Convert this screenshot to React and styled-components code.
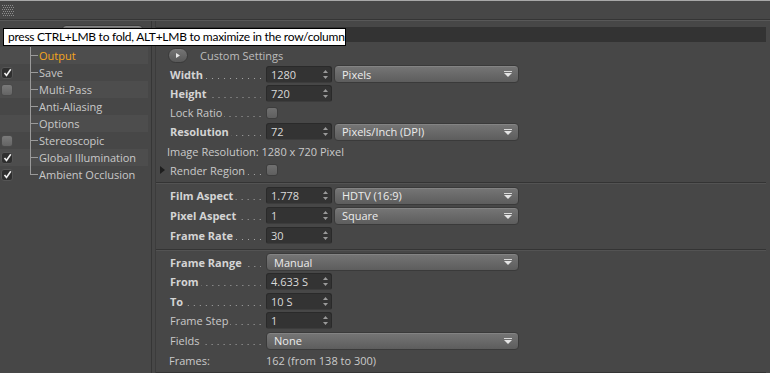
import React from "react"
import styled, { createGlobalStyle } from "styled-components"

const GlobalStyle = createGlobalStyle`
  html, body { margin: 0; padding: 0; background: #474747; }
  body {
    font-family: "Open Sans", "Noto Sans", sans-serif;
    font-size: 11px;
    color: #cfcfcf;
    overflow: hidden;
  }
`

const Window = styled.div`
  position: relative;
  width: 770px;
  height: 373px;
  overflow: hidden;
  background: #474747;
  display: flex;
  flex-direction: column;
`

const TopBar = styled.div`
  height: 18px;
  border-top: 1px solid #a8a8a8;
  border-bottom: 1px solid #353535;
  display: flex;
  align-items: center;
  padding-left: 2px;
`

const Rule = styled.div`
  height: 1px;
  background: #585858;
`

const Main = styled.div`
  flex: 1;
  display: flex;
  min-height: 0;
`

/* ---------- left tree ---------- */

const LeftPanel = styled.div`
  width: 151px;
  border-right: 1px solid #363636;
  display: flex;
  flex-direction: column;
`

const RendererRow = styled.div`
  height: 26px;
  display: flex;
  align-items: center;
  padding-left: 10px;
  color: #cfcfcf;
`

const RendererLabel = styled.span`
  width: 52px;
`

const TreeRow = styled.div`
  width: 148px;
  height: 17px;
  display: flex;
  align-items: center;
  background: ${p => (p.$even ? "#4d4d4d" : "transparent")};
`

const CheckCell = styled.div`
  width: 30px;
  height: 100%;
  display: flex;
  align-items: center;
  padding-left: 1px;
  box-sizing: border-box;
`

const TreeCheck = styled.div`
  width: 12px;
  height: 12px;
  box-sizing: border-box;
  border-radius: 3px;
  display: flex;
  align-items: center;
  justify-content: center;
  background: ${p => (p.$on ? "#2f2f2f" : "linear-gradient(#7a7a7a, #646464)")};
  border: 1px solid ${p => (p.$on ? "#555" : "#4a4a4a")};
`

const TreeLabel = styled.span`
  margin-left: 1px;
  white-space: nowrap;
  color: ${p => (p.$active ? "#f5a61d" : "#c9c9c9")};
`

/* ---------- right attributes ---------- */

const RightPanel = styled.div`
  flex: 1;
  padding: 0 4px 0 3px;
  display: flex;
`

const Inner = styled.div`
  flex: 1;
  border-left: 1px solid #3c3c3c;
  display: flex;
  flex-direction: column;
`

const Header = styled.div`
  margin-top: 6px;
  height: 15px;
  line-height: 15px;
  background: #333333;
  color: #d0d0d0;
  font-weight: 700;
  padding-left: 14px;
`

const Group = styled.div`
  padding-top: ${p => p.$pt}px;
  padding-bottom: ${p => p.$pb}px;
  display: flex;
  flex-direction: column;
`

const Separator = styled.div`
  height: 1px;
  background: #343434;
  border-bottom: 1px solid #535353;
  flex: none;
`

const Row = styled.div`
  height: ${p => p.$h}px;
  flex: none;
  display: flex;
  align-items: center;
  padding-left: ${p => p.$indent ?? 14}px;
`

const Label = styled.div`
  width: 91px;
  height: 15px;
  line-height: 15px;
  margin-right: 5px;
  display: flex;
  white-space: nowrap;
  font-weight: ${p => (p.$bold ? 700 : 400)};
  color: ${p => (p.$bold ? "#d4d4d4" : "#c9c9c9")};
`

const LabelText = styled.span`
  flex: none;
`

/* leader dots, right aligned like the app draws them */
const Leader = styled.span`
  flex: 1;
  margin-left: 2px;
  background-image: linear-gradient(to right, #a6a6a6 1px, transparent 1px);
  background-size: 6px 1px;
  background-repeat: repeat-x;
  background-position: right 1px bottom 3px;
`

const NumberField = styled.div`
  width: 66px;
  height: 17px;
  box-sizing: border-box;
  background: #333333;
  border: 1px solid #2a2a2a;
  border-bottom-color: #3c3c3c;
  border-radius: 3px;
  display: flex;
  align-items: center;
  justify-content: space-between;
  padding: 0 3px 0 4px;
  color: #dadada;
`

const Dropdown = styled.div`
  width: ${p => p.$w}px;
  margin-left: ${p => p.$ml ?? 0}px;
  height: 18px;
  box-sizing: border-box;
  background: linear-gradient(#767676, #5d5d5d);
  border: 1px solid #3a3a3a;
  border-radius: 4px;
  box-shadow: inset 0 1px 0 rgba(255, 255, 255, 0.1);
  display: flex;
  align-items: center;
  justify-content: space-between;
  padding: 0 6px 0 7px;
  color: #ececec;
`

const CheckBox = styled.div`
  width: 12px;
  height: 12px;
  box-sizing: border-box;
  border-radius: 3px;
  border: 1px solid #3d3d3d;
  background: linear-gradient(#707070, #5f5f5f);
`

const RoundButton = styled.div`
  width: 20px;
  height: 15px;
  box-sizing: border-box;
  border-radius: 8px;
  border: 1px solid #3a3a3a;
  background: linear-gradient(#767676, #585858);
  display: flex;
  align-items: center;
  justify-content: center;
`

const SubTitle = styled.span`
  margin-left: 12px;
  color: #bdbdbd;
`

const Plain = styled.span`
  color: #cacaca;
  width: ${p => (p.$w ? `${p.$w}px` : "auto")};
  flex: none;
`

const Tooltip = styled.div`
  position: absolute;
  left: 3px;
  top: 28px;
  width: 343px;
  height: 18px;
  box-sizing: border-box;
  background: #ffffff;
  border: 1px solid #000;
  color: #000;
  font-family: Lato, "Open Sans", sans-serif;
  font-size: 12px;
  letter-spacing: -0.26px;
  line-height: 16px;
  padding-left: 4px;
  white-space: nowrap;
  overflow: hidden;
`

/* ---------- drawings ---------- */

const Grip = () => {
  const dots = []
  for (let y = 0; y < 12; y += 2)
    for (let x = 0; x < 11; x += 2)
      dots.push(<rect key={`${x}-${y}`} x={x + ((y / 2) % 2)} y={y} width="1" height="1" fill="#8c8c8c" />)
  return (
    <svg width="12" height="12" style={{ marginTop: 1 }}>
      {dots}
    </svg>
  )
}

const Spinner = () => (
  <svg width="5" height="9" viewBox="0 0 5 9">
    <polygon points="2.5,0 5,3 0,3" fill="#9a9a9a" />
    <polygon points="0,6 5,6 2.5,9" fill="#9a9a9a" />
  </svg>
)

const DropArrow = () => (
  <svg width="8" height="6" viewBox="0 0 8 6">
    <rect x="0" y="0" width="8" height="1" fill="#d8d8d8" />
    <polygon points="0,2 8,2 4,6" fill="#e4e4e4" />
  </svg>
)

const Tick = () => (
  <svg width="9" height="9" viewBox="0 0 9 9">
    <path d="M1.5 5 L3.5 7.5 L7.8 1.2" stroke="#f0f0f0" strokeWidth="1.6" fill="none" />
  </svg>
)

const Branch = ({ last }) => (
  <svg width="8" height="17" viewBox="0 0 8 17">
    <rect x="0" y="0" width="1" height={last ? 9 : 17} fill="#9a9a9a" />
    <rect x="0" y="8" width="8" height="1" fill="#9a9a9a" />
  </svg>
)

const PlayTri = () => (
  <svg width="4" height="5" viewBox="0 0 4 5">
    <polygon points="0,0 4,2.5 0,5" fill="#e8e8e8" />
  </svg>
)

const FoldTri = () => (
  <svg width="5" height="8" viewBox="0 0 5 8" style={{ marginRight: 5 }}>
    <polygon points="0,0 5,4 0,8" fill="#1e1e1e" />
  </svg>
)

/* ---------- data ---------- */

const tree = [
  { name: "Output", check: null, active: true },
  { name: "Save", check: true },
  { name: "Multi-Pass", check: false },
  { name: "Anti-Aliasing", check: null },
  { name: "Options", check: null },
  { name: "Stereoscopic", check: false },
  { name: "Global Illumination", check: true },
  { name: "Ambient Occlusion", check: true },
]

const Field = ({ label, bold }) => (
  <Label $bold={bold}>
    <LabelText>{label}</LabelText>
    <Leader />
  </Label>
)

const Num = ({ value }) => (
  <NumberField>
    <span>{value}</span>
    <Spinner />
  </NumberField>
)

const Select = ({ value, w, ml }) => (
  <Dropdown $w={w} $ml={ml}>
    <span>{value}</span>
    <DropArrow />
  </Dropdown>
)

export default function App() {
  return (
    <Window>
      <GlobalStyle />
      <TopBar>
        <Grip />
      </TopBar>
      <Rule />
      <Main>
        <LeftPanel>
          <RendererRow>
            <RendererLabel>Renderer</RendererLabel>
            <Select value="Standard" w={81} />
          </RendererRow>
          {tree.map((t, i) => (
            <TreeRow key={t.name} $even={i % 2 === 0}>
              <CheckCell>
                {t.check !== null && (
                  <TreeCheck $on={t.check}>{t.check && <Tick />}</TreeCheck>
                )}
              </CheckCell>
              <Branch last={i === tree.length - 1} />
              <TreeLabel $active={t.active}>{t.name}</TreeLabel>
            </TreeRow>
          ))}
        </LeftPanel>

        <RightPanel>
          <Inner>
            <Header>Output</Header>

            <Group $pt={3.5} $pb={2.1}>
              <Row $h={19.2} $indent={12}>
                <RoundButton>
                  <PlayTri />
                </RoundButton>
                <SubTitle>Custom Settings</SubTitle>
              </Row>
              <Row $h={19.2}>
                <Field label="Width" bold />
                <Num value="1280" />
                <Select value="Pixels" w={185} ml={2} />
              </Row>
              <Row $h={19.2}>
                <Field label="Height" bold />
                <Num value="720" />
              </Row>
              <Row $h={19.2}>
                <Field label="Lock Ratio" />
                <CheckBox />
              </Row>
              <Row $h={19.2}>
                <Field label="Resolution" bold />
                <Num value="72" />
                <Select value="Pixels/Inch (DPI)" w={185} ml={2} />
              </Row>
              <Row $h={19.2} $indent={11}>
                <Plain>Image Resolution: 1280 x 720 Pixel</Plain>
              </Row>
              <Row $h={19.2} $indent={4}>
                <FoldTri />
                <Field label="Render Region" />
                <CheckBox />
              </Row>
            </Group>

            <Separator />

            <Group $pt={2} $pb={3}>
              <Row $h={20}>
                <Field label="Film Aspect" bold />
                <Num value="1.778" />
                <Select value="HDTV (16:9)" w={185} ml={2} />
              </Row>
              <Row $h={20}>
                <Field label="Pixel Aspect" bold />
                <Num value="1" />
                <Select value="Square" w={185} ml={2} />
              </Row>
              <Row $h={20}>
                <Field label="Frame Rate" bold />
                <Num value="30" />
              </Row>
            </Group>

            <Separator />

            <Group $pt={1.5} $pb={1.9}>
              <Row $h={19.6}>
                <Field label="Frame Range" bold />
                <Select value="Manual" w={253} />
              </Row>
              <Row $h={19.6}>
                <Field label="From" bold />
                <Num value="4.633 S" />
              </Row>
              <Row $h={19.6}>
                <Field label="To" bold />
                <Num value="10 S" />
              </Row>
              <Row $h={19.6}>
                <Field label="Frame Step" />
                <Num value="1" />
              </Row>
              <Row $h={19.6}>
                <Field label="Fields" />
                <Select value="None" w={253} />
              </Row>
              <Row $h={19.6} $indent={13}>
                <Plain $w={97}>Frames:</Plain>
                <Plain>162 (from 138 to 300)</Plain>
              </Row>
            </Group>

            <Separator />
          </Inner>
        </RightPanel>
      </Main>

      <Tooltip>press CTRL+LMB to fold, ALT+LMB to maximize in the row/column</Tooltip>
    </Window>
  )
}
